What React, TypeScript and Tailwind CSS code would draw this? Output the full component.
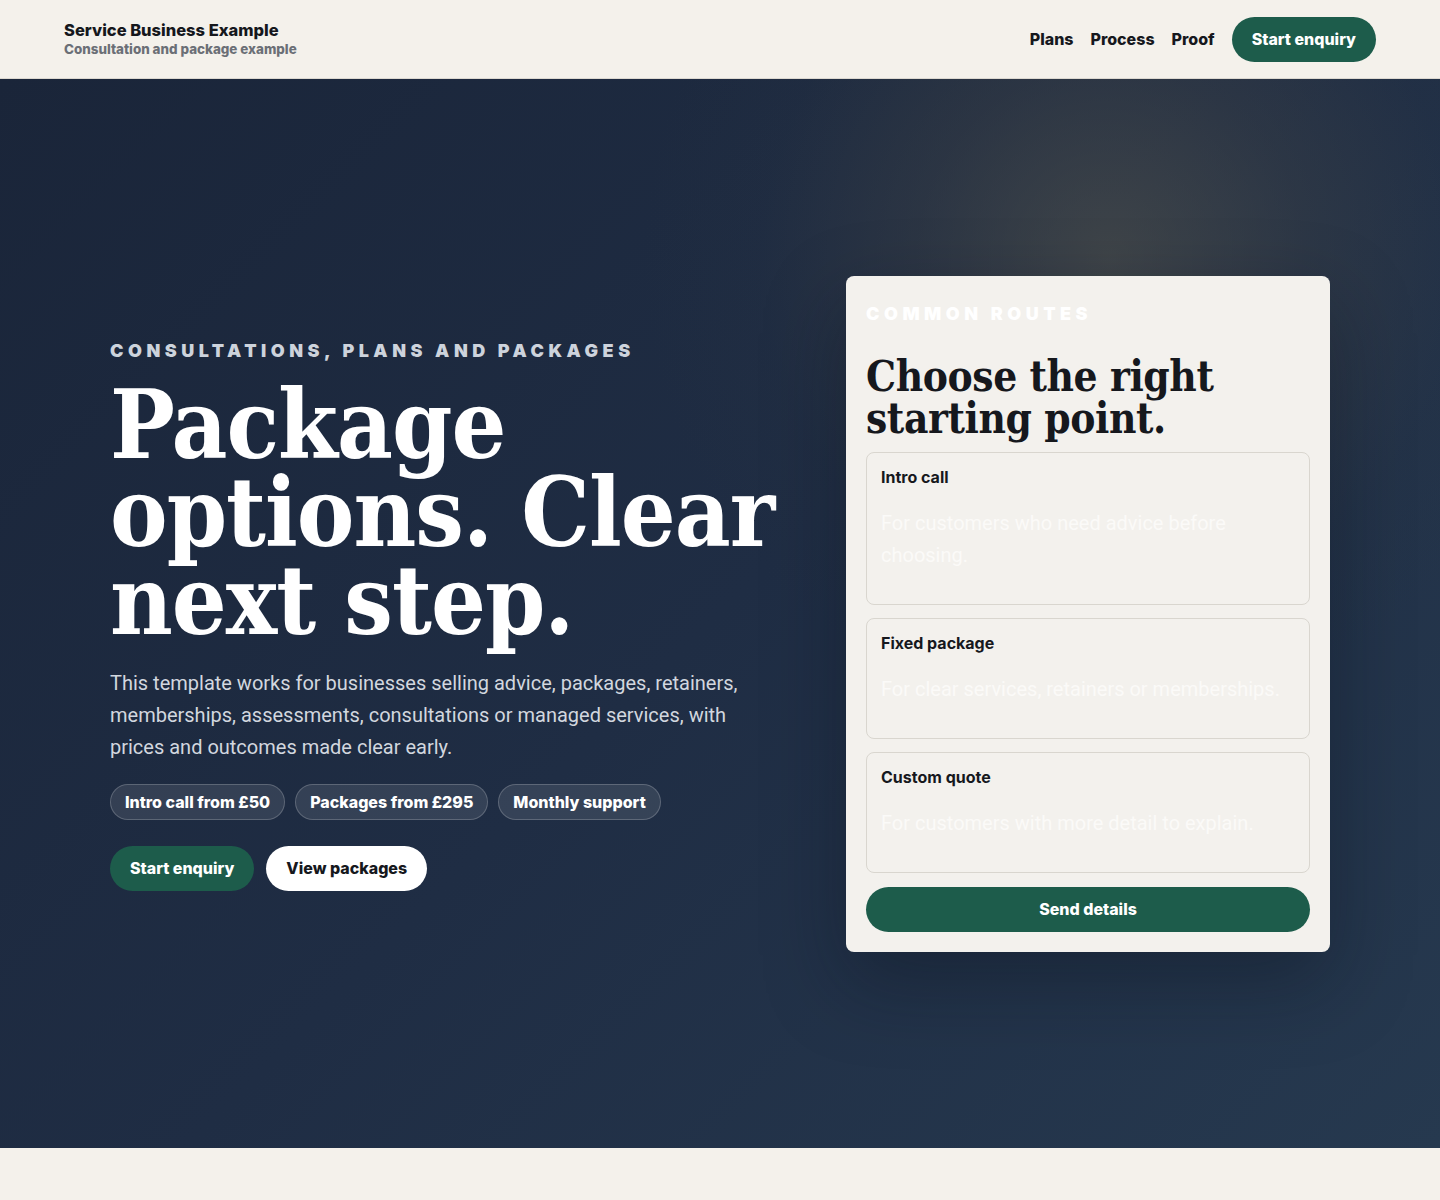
import React from "react";

const routes = [
  { title: "Intro call", text: "For customers who need advice before choosing." },
  { title: "Fixed package", text: "For clear services, retainers or memberships." },
  { title: "Custom quote", text: "For customers with more detail to explain." },
];

const chips = ["Intro call from £50", "Packages from £295", "Monthly support"];

const serif = "font-['DejaVu_Serif_Condensed','DejaVu_Serif',Georgia,serif]";
const body = "font-['Roboto',sans-serif]";

export default function App() {
  return (
    <div className="min-h-[1200px] bg-[#f4f1eb] font-['Inter',sans-serif] text-[#16181d]">
      {/* Header */}
      <header className="flex h-[79px] items-center justify-between border-b border-[#dcd8d0] px-16">
        <div className="leading-tight">
          <div className="text-[16.5px] font-extrabold text-[#15171c]">Service Business Example</div>
          <div className="text-[13.4px] font-extrabold text-[#6b6f76]">Consultation and package example</div>
        </div>
        <nav className="flex items-center gap-[17px] text-base font-extrabold">
          <a className="text-[#16181d]">Plans</a>
          <a className="text-[#16181d]">Process</a>
          <a className="text-[#16181d]">Proof</a>
          <a className="flex h-[45px] items-center rounded-full bg-[#1d5c4b] px-5 text-white">Start enquiry</a>
        </nav>
      </header>

      {/* Hero */}
      <section className="relative h-[1069px] overflow-hidden bg-[linear-gradient(135deg,#1a2539_0%,#1f2d44_50%,#26394f_100%)]">
        <div className="pointer-events-none absolute left-[1110px] top-[180px] h-[1100px] w-[1100px] -translate-x-1/2 -translate-y-1/2 rounded-full bg-[radial-gradient(circle,rgba(84,84,76,0.6)_0%,rgba(68,70,70,0.35)_25%,rgba(45,55,68,0.12)_45%,rgba(40,50,65,0)_60%)]" />
        <div className="relative mx-auto grid h-full max-w-[1220px] grid-cols-[1fr_484px] items-center gap-6">
          <div>
            <p className="mb-[16px] text-lg font-black uppercase tracking-[0.25em] text-[#cdd3dc]">
              Consultations, plans and packages
            </p>
            <h1 className={`${serif} max-w-[700px] text-[96px] font-bold leading-[88px] tracking-[-0.01em] text-white`}>
              Package options. Clear next step.
            </h1>
            <p className={`${body} mt-[22px] max-w-[650px] text-xl leading-8 text-[#d2d7df]`}>
              This template works for businesses selling advice, packages, retainers, memberships,
              assessments, consultations or managed services, with prices and outcomes made clear early.
            </p>
            <div className="mt-[21px] flex gap-[10px]">
              {chips.map((c) => (
                <span
                  key={c}
                  className="flex h-9 items-center rounded-full border border-white/20 bg-white/10 px-[14px] text-base font-extrabold text-white"
                >
                  {c}
                </span>
              ))}
            </div>
            <div className="mt-[26px] flex gap-3 text-base font-extrabold">
              <a className="flex h-[45px] items-center rounded-full bg-[#1d5c4b] px-5 text-white">
                Start enquiry
              </a>
              <a className="flex h-[45px] items-center rounded-full bg-white px-5 text-[#16181d]">
                View packages
              </a>
            </div>
          </div>

          <div className="rounded-lg bg-[#f3f1ed] p-5 shadow-[0_30px_80px_rgba(10,15,25,0.35)]">
            <p className="text-lg font-black uppercase leading-9 tracking-[0.25em] text-white">Common routes</p>
            <h2 className={`${serif} mt-[24px] text-[42px] font-bold leading-[42px] tracking-[-0.01em] text-[#16181d]`}>
              Choose the right starting point.
            </h2>
            <div className="mt-3 flex flex-col gap-[13px]">
              {routes.map((r) => (
                <div key={r.title} className="rounded-lg border border-[#d9d6cf] px-[14px] pb-[33px] pt-3">
                  <div className="text-base font-bold leading-6 text-[#16181d]">{r.title}</div>
                  <p className={`${body} mt-[18px] text-xl leading-8 text-[#fbfaf8]`}>{r.text}</p>
                </div>
              ))}
            </div>
            <button className="mt-[14px] h-[45px] w-full rounded-full bg-[#1d5c4b] text-base font-extrabold text-white">
              Send details
            </button>
          </div>
        </div>
      </section>
    </div>
  );
}
